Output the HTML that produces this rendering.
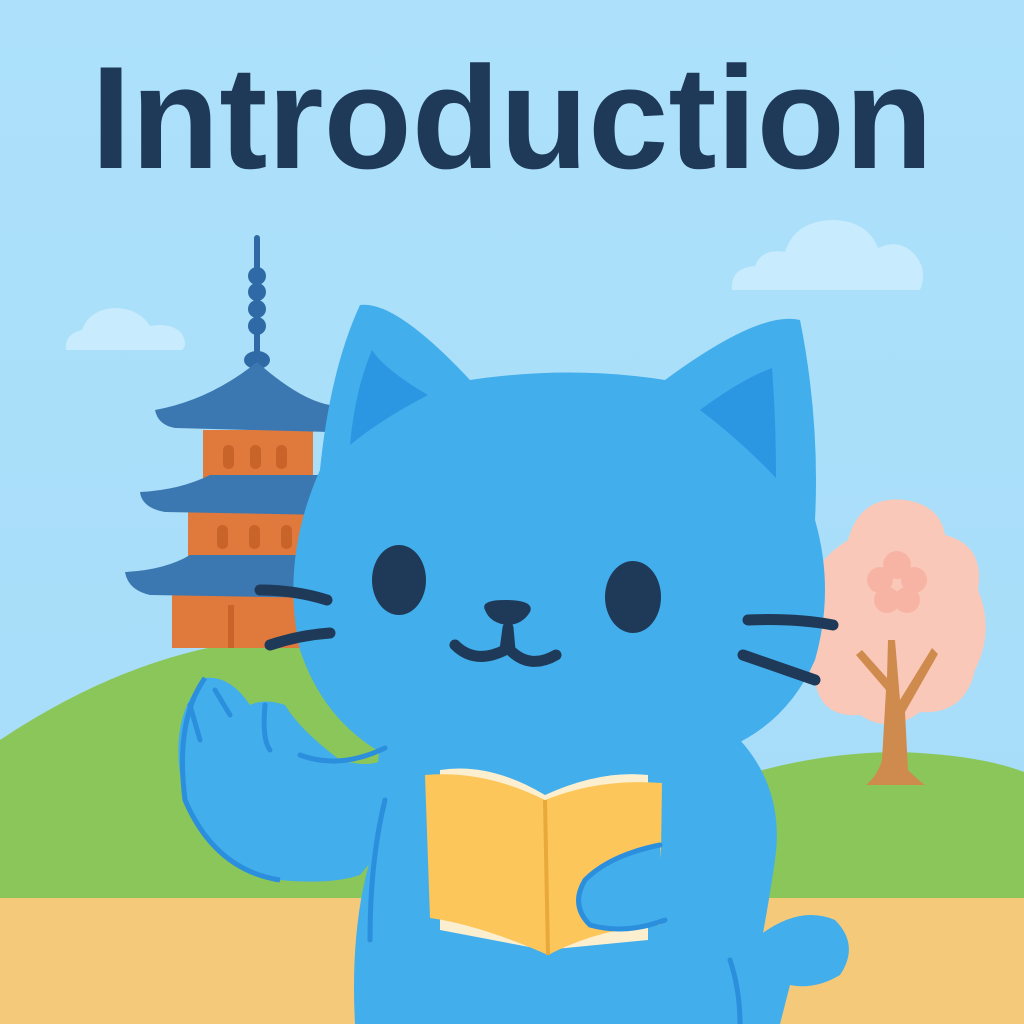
<!DOCTYPE html>
<html><head><meta charset="utf-8"><style>
html,body{margin:0;padding:0;width:1024px;height:1024px;overflow:hidden}
svg{display:block}
</style></head><body>
<svg width="1024" height="1024" viewBox="0 0 1024 1024" xmlns="http://www.w3.org/2000/svg">
<defs>
<linearGradient id="sky" x1="0" y1="0" x2="0" y2="1">
<stop offset="0" stop-color="#ade1fb"/><stop offset="1" stop-color="#a6dcf8"/>
</linearGradient>
</defs>
<rect width="1024" height="1024" fill="url(#sky)"/>
<text x="512" y="168" text-anchor="middle" font-family="Liberation Sans, sans-serif" font-weight="bold" font-size="146" fill="#1f3a58" textLength="842" lengthAdjust="spacingAndGlyphs">Introduction</text>
<!-- clouds -->
<path d="M732 290 Q730 268 755 266 Q762 248 785 252 Q795 220 835 220 Q868 222 878 248 Q900 238 915 255 Q928 270 920 290 Z" fill="#c8ebfd"/>
<path d="M66 350 Q64 334 82 330 Q90 308 118 308 Q140 310 150 326 Q172 322 182 334 Q188 345 182 350 Z" fill="#c8ebfd"/>
<!-- hills -->
<path d="M0 740 Q120 660 240 642 Q360 630 470 700 L520 900 L0 900 Z" fill="#8bc65a"/>
<path d="M700 790 Q800 752 900 752 Q980 755 1024 772 L1024 900 L700 900 Z" fill="#8bc65a"/>
<rect y="898" width="1024" height="126" fill="#f5c97a"/>
<!-- pagoda -->
<rect x="254" y="235" width="6" height="120" rx="3" fill="#2f6aa6"/>
<circle cx="257" cy="276" r="9" fill="#2f6aa6"/><circle cx="257" cy="292" r="9" fill="#2f6aa6"/>
<circle cx="257" cy="309" r="9" fill="#2f6aa6"/><circle cx="257" cy="326" r="9" fill="#2f6aa6"/>
<ellipse cx="257" cy="360" rx="13" ry="9" fill="#2f6aa6"/>
<rect x="203" y="430" width="110" height="50" fill="#e07a3c"/>
<rect x="223" y="445" width="11" height="24" rx="5" fill="#c8642a"/><rect x="250" y="445" width="11" height="24" rx="5" fill="#c8642a"/><rect x="276" y="445" width="11" height="24" rx="5" fill="#c8642a"/>
<rect x="188" y="512" width="130" height="45" fill="#e07a3c"/>
<rect x="217" y="525" width="11" height="24" rx="5" fill="#c8642a"/><rect x="249" y="525" width="11" height="24" rx="5" fill="#c8642a"/><rect x="281" y="525" width="11" height="24" rx="5" fill="#c8642a"/>
<rect x="172" y="595" width="140" height="53" fill="#e07a3c"/>
<rect x="228" y="605" width="6" height="43" fill="#c8642a"/>
<path d="M155 410 Q210 400 257 362 Q300 400 330 405 L330 432 L175 428 Q158 425 155 410 Z" fill="#3b78b2"/>
<path d="M140 492 Q180 490 210 475 L330 475 L330 515 L165 512 Q142 508 140 492 Z" fill="#3b78b2"/>
<path d="M125 572 Q165 570 190 555 L330 555 L330 598 L150 595 Q128 590 125 572 Z" fill="#3b78b2"/>
<!-- tree -->
<path d="M848 540 Q860 495 905 500 Q940 505 945 535 Q985 545 978 590 Q995 630 975 670 Q965 715 920 712 Q890 735 860 715 Q820 718 815 680 Q795 650 812 615 Q800 570 848 540 Z" fill="#fac8b8"/>
<g fill="#f7b4a4"><circle cx="897" cy="565" r="14"/><circle cx="880" cy="580" r="13"/><circle cx="914" cy="580" r="13"/><circle cx="887" cy="600" r="13"/><circle cx="907" cy="600" r="13"/></g>
<path d="M888 640 L895 640 L900 700 L932 648 L938 654 L905 712 L908 770 Q918 780 925 785 L866 785 Q878 775 882 760 L886 690 L856 655 L862 650 L887 678 Z" fill="#cf8a4e"/>
<!-- cat -->
<g fill="#42aeeb">
<path d="M205 678 Q230 675 250 705 Q265 698 285 705 Q300 730 340 760 Q375 770 390 755 L420 800 Q390 840 360 875 Q330 885 280 880 Q215 870 185 800 Q165 720 205 678 Z"/>
<path d="M760 935 Q800 905 835 920 Q860 945 840 975 Q815 990 790 985 L780 1024 L720 1024 Z"/>
<path d="M380 740 L740 740 Q785 790 775 860 Q765 930 745 1024 L355 1024 Q350 930 370 860 Z"/>
<path d="M360 305 Q395 300 470 380 Q570 365 665 380 Q760 310 800 320 Q820 420 815 520 Q835 590 815 660 Q780 740 690 760 Q560 790 420 770 Q330 740 300 650 Q280 560 320 470 Q330 370 360 305 Z"/>
</g>
<path d="M372 350 Q385 370 428 395 Q380 420 350 445 Q355 390 372 350 Z" fill="#2b97e3"/>
<path d="M772 368 Q776 420 776 478 Q740 440 700 410 Q740 380 772 368 Z" fill="#2b97e3"/>
<path d="M205 678 Q175 720 185 800 Q215 870 280 880" fill="none" stroke="#2b8fdd" stroke-width="5"/>
<path d="M190 705 L200 740 M215 690 L230 715 M265 705 Q262 740 270 750 M300 755 Q340 770 385 748" fill="none" stroke="#2b8fdd" stroke-width="5" stroke-linecap="round"/>
<path d="M385 800 Q370 860 370 940 M730 960 Q740 990 740 1024" fill="none" stroke="#2b8fdd" stroke-width="5" stroke-linecap="round"/>
<!-- face -->
<ellipse cx="399" cy="580" rx="27" ry="35" fill="#1f3a58"/>
<ellipse cx="633" cy="597" rx="28" ry="36" fill="#1f3a58"/>
<path d="M485 610 Q480 600 505 600 Q535 600 530 612 Q522 625 507 625 Q490 623 485 610 Z" fill="#1f3a58"/>
<path d="M455 645 Q475 665 505 650 L508 628 M508 628 L510 650 Q530 670 556 655" fill="none" stroke="#1f3a58" stroke-width="11" stroke-linecap="round" stroke-linejoin="round"/>
<path d="M260 590 Q295 590 327 600 M270 645 Q300 635 330 633 M748 620 Q795 618 833 625 M743 655 Q780 668 815 680" fill="none" stroke="#1f3a58" stroke-width="11" stroke-linecap="round"/>
<!-- book -->
<path d="M440 770 Q490 762 545 795 Q600 770 648 775 L648 940 L545 950 L440 930 Z" fill="#fcefd0"/>
<path d="M425 775 Q485 770 545 800 L548 955 Q480 925 430 918 Z" fill="#fcc65a"/>
<path d="M545 800 Q600 778 662 783 L660 925 Q600 928 548 955 Z" fill="#fcc65a"/>
<path d="M545 800 L548 955" stroke="#e8a83a" stroke-width="4"/>
<!-- holding paw -->
<path d="M660 845 Q610 855 585 880 Q570 905 590 925 Q625 935 665 920" fill="#42aeeb" stroke="#2b8fdd" stroke-width="5" stroke-linecap="round"/>
</svg>
</body></html>
